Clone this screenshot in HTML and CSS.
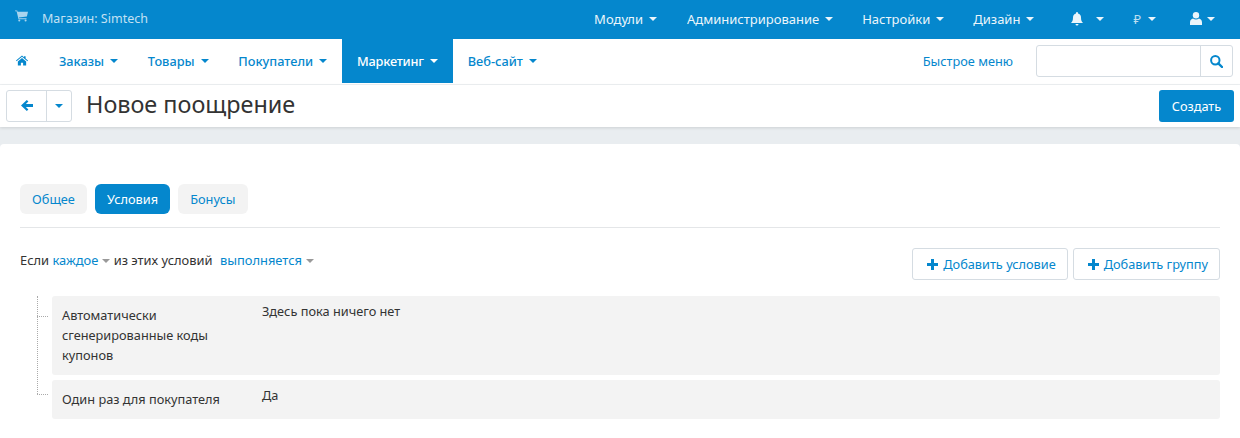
FILE: index.html
```html
<!DOCTYPE html>
<html lang="ru">
<head>
<meta charset="utf-8">
<title>Новое поощрение</title>
<link rel="stylesheet" href="styles.css">
</head>
<body>
<header class="topbar">
  <div class="store">
    <svg class="cart" viewBox="0 0 14 12"><path d="M0 0h2.400l.4 1.400H14l-1.200 5.200-8.600.9.300 1H12.400v1H3.800L1.700 1H0z"/><circle cx="4.600" cy="10.800" r="1.100"/><circle cx="11.400" cy="10.800" r="1.100"/></svg>
    <span>Магазин: Simtech</span>
  </div>
  <nav class="topmenu">
    <a class="tm tm-mod">Модули<i class="caret"></i></a>
    <a class="tm tm-adm">Администрирование<i class="caret"></i></a>
    <a class="tm tm-set">Настройки<i class="caret"></i></a>
    <a class="tm tm-des">Дизайн<i class="caret"></i></a>
    <a class="tm tm-bell"><svg class="bell" viewBox="0 0 14 14"><path d="M7 0a1 1 0 0 1 1 1v.6C10 2 11 3.600 11 5.500c0 3 .8 4.300 2 5.500H1c1.200-1.200 2-2.500 2-5.500C3 3.600 4 2 6 1.600V1a1 1 0 0 1 1-1zM5.500 12h3a1.500 1.500 0 0 1-3 0z"/></svg><i class="caret"></i></a>
    <a class="tm tm-rub"><span class="rub">₽</span><i class="caret"></i></a>
    <a class="tm tm-user"><svg class="user" viewBox="0 0 12 13"><circle cx="6" cy="3.300" r="3.200"/><path d="M0 13v-2.500C0 8 1.500 6.800 3 6.500c1.800 1.300 4.200 1.300 6 0 1.500.3 3 1.500 3 4V13z"/></svg><i class="caret"></i></a>
  </nav>
</header>
<div class="navbar">
  <a class="nav-home"><svg class="home" viewBox="0 0 13 11"><path d="M6.500 0l2.200 1.900V.8h1.700v2.600L13 5.600l-.6.700L6.500 1.400.6 6.300 0 5.600zM2 6.500l4.500-3.800L11 6.500V11H7.700V8H5.300v3H2z"/></svg></a>
  <a class="nav-item">Заказы<i class="caret"></i></a>
  <a class="nav-item">Товары<i class="caret"></i></a>
  <a class="nav-item">Покупатели<i class="caret"></i></a>
  <a class="nav-item active">Маркетинг<i class="caret"></i></a>
  <a class="nav-item">Веб-сайт<i class="caret"></i></a>
  <a class="quick">Быстрое меню</a>
  <div class="search">
    <span class="search-field"></span>
    <span class="search-btn"><svg class="zoom-icon" viewBox="0 0 13 13"><circle cx="5.300" cy="5.300" r="4.200" fill="none" stroke="currentColor" stroke-width="2"/><path d="M8.300 8.300L12 12" stroke="currentColor" stroke-width="2.400" stroke-linecap="round"/></svg></span>
  </div>
</div>
<div class="titlebar">
  <div class="backgroup">
    <a class="back"><svg class="arrow" viewBox="0 0 12 11"><path d="M5.800 0L7.400 1.600 4.900 4H12v3H4.900l2.500 2.400L5.800 11 0 5.500z"/></svg></a>
    <a class="back-more"><i class="caret"></i></a>
  </div>
  <h1>Новое поощрение</h1>
  <a class="create">Создать</a>
</div>
<main class="content">
  <div class="tabs">
    <a class="tab">Общее</a>
    <a class="tab on">Условия</a>
    <a class="tab">Бонусы</a>
  </div>
  <div class="cond-head">
    <div class="cond-text">Если <a class="lnk">каждое<i class="caret grey"></i></a> из этих условий <a class="lnk second">выполняется<i class="caret grey"></i></a></div>
    <div class="cond-actions">
      <a class="btn"><svg class="plus" viewBox="0 0 11 11"><path d="M4 0h3v4h4v3H7v4H4V7H0V4h4z"/></svg>Добавить условие</a>
      <a class="btn"><svg class="plus" viewBox="0 0 11 11"><path d="M4 0h3v4h4v3H7v4H4V7H0V4h4z"/></svg>Добавить группу</a>
    </div>
  </div>
  <div class="tree">
    <div class="row row-tall">
      <div class="r-name">Автоматически сгенерированные коды купонов</div>
      <div class="r-val">Здесь пока ничего нет</div>
    </div>
    <div class="row row-short">
      <div class="r-name">Один раз для покупателя</div>
      <div class="r-val">Да</div>
    </div>
  </div>
</main>
</body>
</html>
```
FILE: styles.css
```css
* { box-sizing: border-box; }
html, body { margin: 0; height: 100%; }
body {
  background: #e9edf0;
  font-family: "Noto Sans", "Open Sans", sans-serif;
  font-size: 12.750px;
  color: #333;
  overflow: hidden;
}
a { color: #0587cd; text-decoration: none; }
.caret {
  display: inline-block;
  width: 0; height: 0;
  border-left: 4px solid transparent;
  border-right: 4px solid transparent;
  border-top: 4px solid currentColor;
  margin-left: 6px;
  vertical-align: 2px;
}
.caret.grey { color: #999; margin-left: 4px; }

.topbar {
  height: 39px;
  background: #0587cd;
  display: flex;
  align-items: center;
  justify-content: space-between;
  color: #fff;
  padding: 0 0 2px 15px;
}
.store { display: flex; align-items: center; color: #c3e1f3; font-size: 12.500px; }
.cart { width: 13px; height: 12px; fill: #a9d4ee; margin-right: 14px; margin-top: -5px; }
.topmenu { display: flex; align-items: center; padding-right: 25px; font-size: 13px; }
.tm { color: #fff; opacity: .92; display: flex; align-items: center; }
.tm-mod { margin-right: 30px; }
.tm-adm { margin-right: 29px; }
.tm-set { margin-right: 29px; }
.tm-des { margin-right: 36px; }
.tm-bell { margin-right: 29px; }
.tm-rub { margin-right: 34px; }
.bell { width: 14px; height: 14px; fill: #fff; }
.bell + .caret { margin-left: 12px; }
.rub { font-size: 13px; opacity: .8; }
.rub + .caret { margin-left: 7px; }
.user { width: 12px; height: 13px; fill: #fff; }
.user + .caret { margin-left: 5px; }

.navbar {
  height: 46px;
  background: #fff;
  border-bottom: 1px solid #eef1f3;
  display: flex;
  align-items: stretch;
  padding: 0 7px 1px 16px;
}
.nav-home { display: flex; align-items: center; margin-right: 16px; }
.home { width: 12px; height: 11px; fill: #0587cd; margin-top: -1px; }
.nav-item {
  display: flex;
  align-items: center;
  padding: 0 14.900px;
  font-weight: 500;
}
.nav-item .caret { margin-left: 6px; }
.nav-item.active { background: #0587cd; color: #fff; letter-spacing: -.2px; padding: 0 15px; }
.quick { margin-left: auto; align-self: center; margin-right: 23px; }
.search {
  align-self: center;
  width: 197px;
  height: 32px;
  border: 1px solid #d5dce2;
  border-radius: 3px;
  display: flex;
}
.search-field { flex: 1; }
.search-btn {
  width: 32px;
  border-left: 1px solid #d5dce2;
  display: flex;
  align-items: center;
  justify-content: center;
  color: #0587cd;
}
.zoom-icon { width: 13px; height: 13px; }

.titlebar {
  height: 42px;
  background: #fff;
  box-shadow: 0 1px 3px rgba(0,0,0,.12);
  display: flex;
  align-items: center;
  padding: 0 6px;
  position: relative;
}
.backgroup {
  display: flex;
  height: 32px;
  margin-top: -1px;
  border: 1px solid #d5dce2;
  border-radius: 3px;
}
.back {
  width: 40px;
  border-right: 1px solid #d5dce2;
  display: flex; align-items: center; justify-content: center;
}
.arrow { width: 12px; height: 11px; fill: #0587cd; }
.back-more { width: 24px; display: flex; align-items: center; justify-content: center; }
.back-more .caret { margin-left: 0; }
h1 {
  margin: 0 0 5px 14px;
  font-size: 23.400px;
  font-weight: 400;
  color: #333;
}
.create {
  margin-left: auto;
  background: #0587cd;
  color: #fff;
  height: 32px;
  width: 75px;
  border-radius: 3px;
  display: flex; align-items: center; justify-content: center;
}

.content {
  margin-top: 17px;
  background: #fff;
  border-radius: 4px 4px 0 0;
  padding: 40px 20px 0;
  height: 294px;
}
.tabs {
  display: flex;
  gap: 8px;
  padding-bottom: 13px;
  border-bottom: 1px solid #e4e6e8;
}
.tab {
  height: 30px;
  padding: 0 12.100px;
  background: #f3f3f3;
  border-radius: 6px;
  display: flex; align-items: center;
}
.tab.on { background: #0587cd; color: #fff; }

.cond-head {
  display: flex;
  justify-content: space-between;
  align-items: flex-start;
  margin-top: 20px;
}
.cond-text { padding-top: 3px; line-height: 18px; color: #333; font-size: 12.900px; }
.lnk.second { margin-left: 4px; }
.cond-actions { display: flex; gap: 5px; }
.btn {
  height: 32px;
  padding: 0 11px 0 14px;
  border: 1px solid #d5dce2;
  border-radius: 3px;
  display: flex; align-items: center;
  background: #fff;
}
.plus { width: 11px; height: 11px; fill: #0587cd; margin-right: 5px; }

.tree {
  margin: 16px 0 0 17px;
  padding-left: 15px;
  position: relative;
  display: flex;
  flex-direction: column;
  gap: 5px;
}
.tree::before {
  content: "";
  position: absolute;
  left: 0; top: 0; bottom: 25px;
  border-left: 1px dotted #aaa;
}
.row {
  background: #f3f3f3;
  border-radius: 3px;
  display: flex;
  position: relative;
}
.row::before {
  content: "";
  position: absolute;
  left: -15px;
  width: 11px;
  border-top: 1px dotted #aaa;
}
.row-tall { height: 79px; }
.row-tall::before { top: 20px; }
.row-short { height: 39px; }
.row-short::before { top: 14px; }
.r-name {
  width: 210px;
  padding: 9px 20px 0 10px;
  line-height: 20px;
  flex: none;
}
.r-val { padding-top: 5px; line-height: 20px; }
```
